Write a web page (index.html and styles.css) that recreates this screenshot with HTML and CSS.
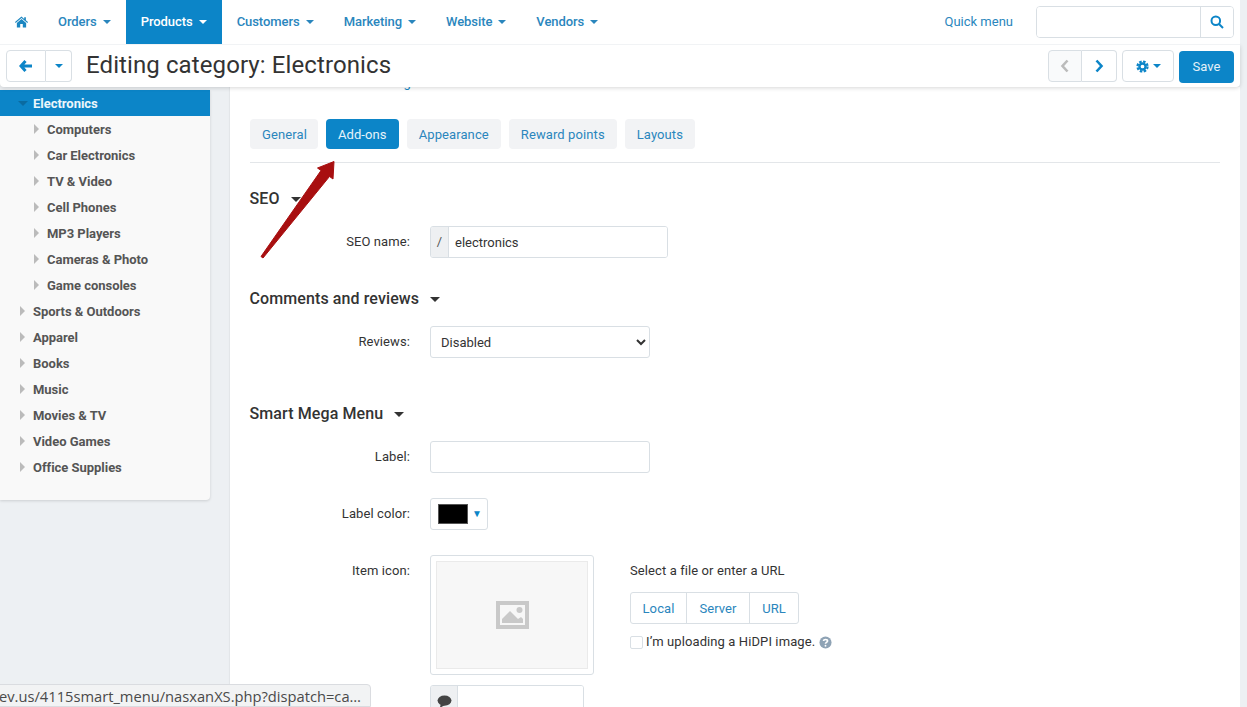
FILE: index.html
```html
<!DOCTYPE html>
<html lang="en">
<head>
<meta charset="utf-8">
<title>Editing category: Electronics</title>
<link rel="stylesheet" href="styles.css">
</head>
<body>
<div class="page">
  <header class="topbar">
    <nav class="mainnav">
      <a class="navitem home"><svg class="ico-home" viewBox="0 0 14 12"><path d="M7 0.2 0 6.1l.7.9L7 1.8 13.3 7l.7-.9-2.3-1.9V1h-1.8v1.7z"/><path d="M7 2.8 2 7v4.8h3.6V8.2h2.8v3.6H12V7z"/></svg></a>
      <a class="navitem">Orders<i class="caret"></i></a>
      <a class="navitem active">Products<i class="caret"></i></a>
      <a class="navitem">Customers<i class="caret"></i></a>
      <a class="navitem">Marketing<i class="caret"></i></a>
      <a class="navitem">Website<i class="caret"></i></a>
      <a class="navitem">Vendors<i class="caret"></i></a>
    </nav>
    <div class="topright">
      <a class="quick">Quick menu</a>
      <div class="search">
        <input class="search-input" type="text" aria-label="Search">
        <button class="search-btn" aria-label="Search"><svg viewBox="0 0 14 14" class="ico-search"><circle cx="5.8" cy="5.8" r="4.3"/><path d="M9 9l4 4"/></svg></button>
      </div>
    </div>
  </header>
  <section class="toolbar">
    <div class="btngroup">
      <button class="tbtn back"><svg viewBox="0 0 14 12" class="ico-back"><path d="M6.5 1 2 6l4.5 5M2.5 6H13"/></svg></button>
      <button class="tbtn drop"><i class="caret blue"></i></button>
    </div>
    <h1 class="title">Editing category: Electronics</h1>
    <div class="tools">
      <div class="btngroup">
        <button class="tbtn pager off"><svg viewBox="0 0 10 14" class="ico-chev"><path d="M7.5 1.5 2.5 7l5 5.500"/></svg></button>
        <button class="tbtn pager"><svg viewBox="0 0 10 14" class="ico-chev"><path d="M2.500 1.500 7.500 7l-5 5.500"/></svg></button>
      </div>
      <button class="tbtn gear"><svg viewBox="0 0 14 14" class="ico-gear"><circle class="gear-teeth" cx="7" cy="7" r="5.4"/><circle class="gear-ring" cx="7" cy="7" r="3.300"/></svg><i class="caret blue"></i></button>
      <button class="save">Save</button>
    </div>
  </section>
  <div class="workspace">
    <aside class="sidebar">
      <ul class="tree">
        <li class="node selected"><i class="tri down"></i>Electronics</li>
        <li class="node child"><i class="tri"></i>Computers</li>
        <li class="node child"><i class="tri"></i>Car Electronics</li>
        <li class="node child"><i class="tri"></i>TV &amp; Video</li>
        <li class="node child"><i class="tri"></i>Cell Phones</li>
        <li class="node child"><i class="tri"></i>MP3 Players</li>
        <li class="node child"><i class="tri"></i>Cameras &amp; Photo</li>
        <li class="node child"><i class="tri"></i>Game consoles</li>
        <li class="node"><i class="tri"></i>Sports &amp; Outdoors</li>
        <li class="node"><i class="tri"></i>Apparel</li>
        <li class="node"><i class="tri"></i>Books</li>
        <li class="node"><i class="tri"></i>Music</li>
        <li class="node"><i class="tri"></i>Movies &amp; TV</li>
        <li class="node"><i class="tri"></i>Video Games</li>
        <li class="node"><i class="tri"></i>Office Supplies</li>
      </ul>
    </aside>
    <main class="content">
      <div class="clipped-link">g</div>
      <div class="tabs">
        <a class="tab">General</a>
        <a class="tab active">Add-ons</a>
        <a class="tab">Appearance</a>
        <a class="tab">Reward points</a>
        <a class="tab">Layouts</a>
      </div>
      <h2 class="section s-seo">SEO<i class="caret dark"></i></h2>
      <div class="row">
        <label class="lbl">SEO name:</label>
        <div class="prefixed seo"><span class="addon">/</span><input class="bare" type="text" value="electronics"></div>
      </div>
      <h2 class="section s-comments">Comments and reviews<i class="caret dark"></i></h2>
      <div class="row">
        <label class="lbl">Reviews:</label>
        <select class="select"><option>Disabled</option></select>
      </div>
      <h2 class="section s-menu">Smart Mega Menu<i class="caret dark"></i></h2>
      <div class="row">
        <label class="lbl">Label:</label>
        <input class="field" type="text">
      </div>
      <div class="row r-color">
        <label class="lbl">Label color:</label>
        <div class="swatch"><span class="chip"></span><span class="chip-arrow">▼</span></div>
      </div>
      <div class="row r-icon">
        <label class="lbl">Item icon:</label>
        <div class="iconbox"><div class="iconinner"><svg viewBox="0 0 33 28" class="ico-image"><path fill-rule="evenodd" d="M0 0h33v28H0zM4 4v20h25V4z"/><circle cx="23.500" cy="9" r="3"/><path d="M6 22v-4l8-8 8 8 3-2 2 2v4z"/></svg></div></div>
        <div class="uploader">
          <div class="upl-title">Select a file or enter a URL</div>
          <div class="upl-btns"><a class="ubtn">Local</a><a class="ubtn">Server</a><a class="ubtn">URL</a></div>
          <label class="hidpi"><input class="check" type="checkbox">I’m uploading a HiDPI image.<svg viewBox="0 0 14 14" class="ico-help"><circle cx="7" cy="7" r="6.500"/><path class="help-q" d="M4.800 5.400C5 3.200 9.200 3.200 9.200 5.400 9.200 6.900 7 6.900 7 8.300"/><circle class="help-d" cx="7" cy="10.500" r="1"/></svg></label>
        </div>
      </div>
      <div class="row r-alt">
        <span class="lbl"></span>
        <div class="prefixed alt"><span class="addon"><svg viewBox="0 0 16 14" class="ico-comment"><ellipse cx="8" cy="6" rx="7.500" ry="5.500"/><path d="M4 9.500 3 14l5-3z"/></svg></span><input class="bare" type="text"></div>
      </div>
    </main>
    <div class="edge"></div>
  </div>
  <svg class="arrow" viewBox="0 0 85 110"><path d="M6 101.500 66 15.500 62.500 13 79 6.500 78 24 74.500 21.500 8 103z" class="arrow-head"/></svg>
  <div class="status">ev.us/4115smart_menu/nasxanXS.php?dispatch=ca…</div>
</div>
</body>
</html>
```
FILE: styles.css
```css
* { box-sizing: border-box; }
html, body { margin: 0; height: 100%; overflow: hidden; }
body { background: #edf0f3; font: 13px/18px Roboto, "Liberation Sans", sans-serif; color: #333; }
a { color: #1a86c1; text-decoration: none; }
button { font-family: inherit; cursor: pointer; padding: 0; }
ul { list-style: none; margin: 0; padding: 0; }
svg { display: block; }

.page { position: relative; width: 1247px; height: 707px; overflow: hidden; }

.caret { display: inline-block; width: 0; height: 0; margin-left: 6px; vertical-align: 2px; border: 4px solid transparent; border-top-color: currentColor; border-bottom-width: 0; }
.caret.blue { color: #0c85c8; margin-left: 0; vertical-align: middle; }
.caret.dark { color: #333; margin-left: 11px; border-width: 5px 5px 0; vertical-align: 2px; }

.topbar { position: relative; z-index: 3; display: flex; justify-content: space-between; width: 1240px; height: 45px; background: #fff; border-bottom: 1px solid #f1f3f5; padding-right: 6px; }
.mainnav { display: flex; }
.navitem { display: flex; align-items: center; height: 44px; padding: 0 15px; font-weight: 500; letter-spacing: -.06px; color: #2a86bd; white-space: nowrap; }
.navitem .caret { margin-left: 6px; }
.navitem.active { background: #0c85c8; color: #fff; }
.ico-home { width: 13px; height: 12px; fill: #1a86c1; }

.topright { display: flex; align-items: center; }
.quick { margin-right: 23px; font-size: 13px; color: #2a86bd; }
.search { display: flex; width: 198px; height: 32px; margin-top: -1px; border: 1px solid #d9dfe4; border-radius: 4px; overflow: hidden; background: #fff; }
.search-input { flex: 1; min-width: 0; border: 0; outline: 0; }
.search-btn { width: 33px; border: 0; border-left: 1px solid #d9dfe4; background: #fff; display: flex; align-items: center; justify-content: center; }
.ico-search { width: 14px; height: 14px; fill: none; stroke: #0c85c8; stroke-width: 2; }

.toolbar { position: relative; z-index: 2; display: flex; align-items: center; width: 1240px; height: 42px; padding: 0 6px; background: #fff; border-radius: 0 0 4px 4px; box-shadow: 0 1px 4px rgba(0, 0, 0, .16); }
.btngroup { display: flex; }
.tbtn { height: 32px; border: 1px solid #d9dfe4; background: #fff; display: flex; align-items: center; justify-content: center; }
.btngroup .tbtn:first-child { border-radius: 4px 0 0 4px; }
.btngroup .tbtn:last-child { border-radius: 0 4px 4px 0; border-left: 0; }
.back { width: 40px; }
.drop { width: 26px; }
.ico-back { width: 14px; height: 12px; fill: none; stroke: #0c85c8; stroke-width: 3; }
.title { margin: -2px 0 0 14px; font-size: 24px; line-height: 32px; font-weight: 400; letter-spacing: .1px; color: #333; white-space: nowrap; }
.tools { margin-left: auto; display: flex; gap: 5px; align-items: center; }
.pager { width: 35px; }
.pager.off { width: 34px; background: #f9fafb; }
.pager.off .ico-chev { stroke: #bbb; }
.ico-chev { width: 10px; height: 14px; fill: none; stroke: #0c85c8; stroke-width: 2.600; }
.gear { width: 52px; gap: 4px; border-radius: 4px; }
.ico-gear { width: 13px; height: 13px; fill: none; }
.gear-teeth { stroke: #0c85c8; stroke-width: 2.400; stroke-dasharray: 2.700 1.540; }
.gear-ring { stroke: #0c85c8; stroke-width: 2.600; }
.save { width: 55px; height: 32px; margin-top: 1px; border: 0; border-radius: 4px; background: #0c85c8; color: #e4f1f8; font-size: 13px; }

.workspace { display: flex; height: 620px; margin-top: 0; }
.sidebar { flex: none; width: 210px; height: 410px; margin-top: 3px; background: #f9f9f9; border-radius: 0 0 4px 0; box-shadow: 0 1px 3px rgba(0, 0, 0, .14); }
.node { position: relative; height: 26px; padding-left: 33px; line-height: 27px; font-weight: 700; font-size: 13px; letter-spacing: -.03px; color: #555; white-space: nowrap; }
.node.child { padding-left: 47px; }
.node.selected { background: #0c85c8; color: #ecf6fb; }
.tri { position: absolute; left: 20px; top: 8px; border: 5px solid transparent; border-left-color: #bbb; border-right-width: 0; border-left-width: 5px; }
.child .tri { left: 34px; }
.tri.down { left: 18px; top: 11px; border-width: 5px 5px 0; border-color: #0a6ba1 transparent transparent; }

.content { flex: none; width: 1010px; margin-left: 20px; height: 620px; padding: 0 20px; background: #fff; letter-spacing: .1px; box-shadow: -1px 0 1px rgba(0, 0, 0, .04); }
.clipped-link { width: 161px; height: 45px; margin-top: -13px; text-align: right; color: #1a86c1; line-height: 18px; }
.tabs { display: flex; gap: 8px; height: 44px; border-bottom: 1px solid #e3e6e9; }
.tab { display: flex; align-items: center; height: 30px; padding: 1px 12px 0; border-radius: 4px; background: #f2f3f5; color: #2a86bd; }
.tab:first-child { padding-right: 11px; }
.tab.active { background: #0c85c8; color: #e6f3fa; }
.section { margin: 0 0 0 -.5px; font-size: 16px; line-height: 22px; font-weight: 500; color: #333; }
.s-seo { margin-top: 25px; }
.s-comments { margin-top: 30px; }
.s-menu { margin-top: 45px; }
.row { display: flex; gap: 20px; align-items: flex-start; }
.s-seo + .row { margin-top: 16px; }
.s-comments + .row { margin-top: 16px; }
.s-menu + .row { margin-top: 16px; }
.lbl { flex: none; width: 160px; padding-top: 7px; text-align: right; color: #333; }
.field, .select { width: 220px; height: 32px; border: 1px solid #d9dfe4; border-radius: 3px; background: #fff; font: 13px Roboto, sans-serif; color: #333; }
.select { padding-left: 6px; }
.prefixed { display: flex; height: 32px; border: 1px solid #d9dfe4; border-radius: 3px; overflow: hidden; background: #fff; }
.seo { width: 238px; }
.alt { width: 154px; }
.addon { display: flex; flex: none; width: 18px; align-items: center; justify-content: center; background: #eef0f2; border-right: 1px solid #d9dfe4; color: #555; }
.alt .addon { width: 27px; }
.bare { flex: 1; min-width: 0; border: 0; outline: 0; padding: 0 6px; font: 13px Roboto, sans-serif; color: #333; }
.r-color { margin-top: 25px; }
.swatch { display: flex; align-items: center; gap: 4px; width: 58px; height: 32px; padding-left: 7px; border: 1px solid #d9dfe4; border-radius: 3px; background: #fff; }
.chip { flex: none; width: 30px; height: 20px; background: #000; border: 1px solid #555; }
.chip-arrow { font-size: 10px; line-height: 10px; color: #0c85c8; }
.r-icon { margin-top: 25px; }
.iconbox { flex: none; width: 164px; height: 120px; padding: 5px; border: 1px solid #d9dfe4; border-radius: 3px; background: #fff; }
.iconinner { display: flex; align-items: center; justify-content: center; height: 108px; background: #f7f7f7; border: 1px solid #eaeaea; }
.ico-image { width: 33px; height: 28px; fill: #c9c9c9; }
.uploader { margin-left: 16px; padding-top: 7px; }
.upl-title { line-height: 18px; }
.upl-btns { display: flex; margin-top: 12px; height: 32px; width: 169px; border: 1px solid #d9dfe4; border-radius: 3px; }
.ubtn { display: flex; align-items: center; justify-content: center; padding-top: 1px; border-left: 1px solid #d9dfe4; color: #2a86bd; }
.ubtn:nth-child(1) { width: 55px; border-left: 0; }
.ubtn:nth-child(2) { width: 63px; }
.ubtn:nth-child(3) { width: 49px; }
.hidpi { display: flex; align-items: center; margin-top: 9px; white-space: nowrap; }
.check { width: 13px; height: 13px; margin: 0 3px 0 0; appearance: none; border: 1px solid #d9dfe4; border-radius: 2px; background: #fff; }
.ico-help { width: 13px; height: 13px; margin-left: 4px; fill: #8fa3b5; }
.help-q { fill: none; stroke: #fff; stroke-width: 1.800; }
.help-d { fill: #fff; }
.r-alt { margin-top: 10px; }
.ico-comment { width: 15px; height: 13px; fill: #444; margin-top: -8px; }
.alt { height: 40px; align-items: stretch; }
.edge { flex: none; width: 7px; background: #edf0f3; }

.arrow { position: absolute; z-index: 1; left: 255px; top: 155px; width: 85px; height: 110px; }
.arrow-head { fill: #a80f10; stroke: #a80f10; stroke-width: 1; stroke-linejoin: round; }

.status { position: absolute; z-index: 5; left: -4px; bottom: 0; width: 375px; height: 23px; padding: 0 10px 0 2px; background: #f2f3f4; border: 1px solid #dadce0; border-radius: 0 4px 0 0; font: 14.7px/22px "Open Sans", "Noto Sans", sans-serif; color: #4a4a4a; white-space: nowrap; overflow: hidden; }
```
